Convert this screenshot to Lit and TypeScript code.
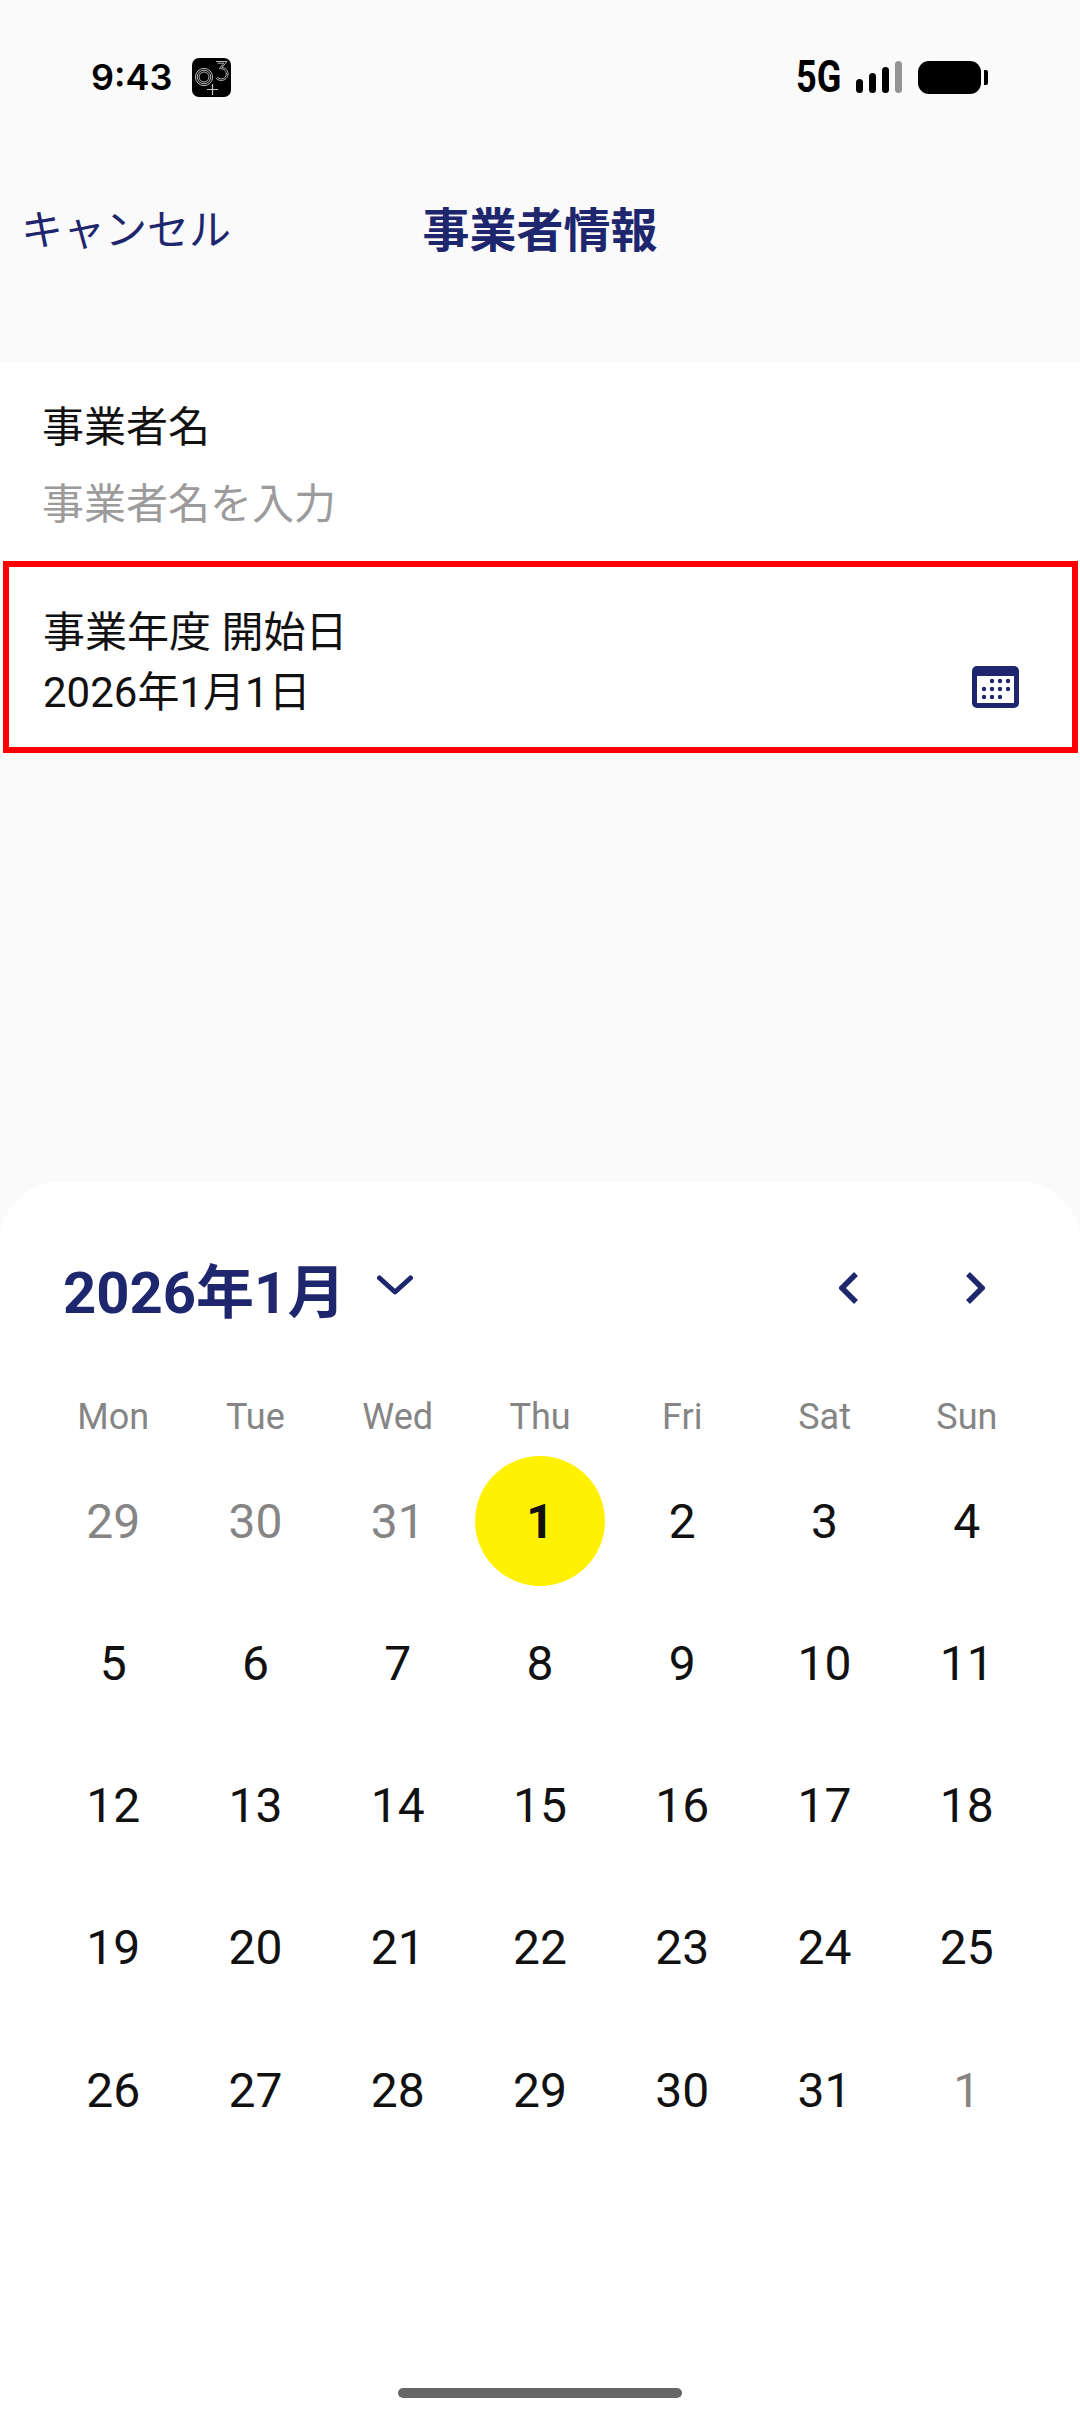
import { LitElement, css, html, svg } from 'lit';
import { customElement } from 'lit/decorators.js';
import { classMap } from 'lit/directives/class-map.js';

const WEEKDAYS = ['Mon', 'Tue', 'Wed', 'Thu', 'Fri', 'Sat', 'Sun'];

// 35 cells, Mon start, Jan 2026 with the overflow days marked as muted
const DAYS: { n: number; muted?: boolean; selected?: boolean }[] = [
  { n: 29, muted: true },
  { n: 30, muted: true },
  { n: 31, muted: true },
  ...Array.from({ length: 31 }, (_, i) => ({ n: i + 1, selected: i === 0 })),
  { n: 1, muted: true },
];

const o3Icon = html`
  <svg class="o3" viewBox="0 0 39 39" aria-hidden="true">
    <rect width="39" height="39" rx="7" fill="#000" />
    <g fill="none" stroke="#c9c9c9" stroke-width="0.9">
      <circle cx="12" cy="19" r="8.6" />
      <circle cx="12" cy="19" r="6.8" />
      <circle cx="12" cy="19" r="5" />
      <path d="M24 3.5h11l-5 6c3.400.2 6 2.800 6 6.300 0 3.900-3 6.700-6.800 6.700-2.300 0-4.200-1-5.400-2.700" />
      <path d="M25.500 5.200h6.400l-4.600 5.500c3.800-.5 7 1.700 7 5.200 0 3-2.300 5-5 5-1.700 0-3-.7-4-1.900" />
      <path d="M20.500 26v11M15 31.500h11" stroke-width="1.200" />
    </g>
  </svg>
`;

const calendarDots: [number, number][] = [
  [20, 15], [28, 15], [36, 15],
  [12, 23], [20, 23], [28, 23], [36, 23],
  [12, 31], [20, 31], [28, 31],
];

const calendarIcon = html`
  <svg class="cal" viewBox="0 0 47 42" aria-hidden="true">
    <rect width="47" height="42" rx="5" fill="#1e276e" />
    <rect x="5" y="10" width="37" height="27" fill="#fff" />
    ${calendarDots.map(([x, y]) => svg`<circle cx=${x} cy=${y} r="2.200" fill="#1e276e" />`)}
  </svg>
`;

@customElement('app-root')
export class AppRoot extends LitElement {
  render() {
    return html`
      <div class="page">
        <div class="status">
          <div class="status-left">
            <span class="time">9:43</span>
            ${o3Icon}
          </div>
          <div class="status-right">
            <span class="net">5G</span>
            <div class="signal">
              <i style="height:14px"></i>
              <i style="height:20px"></i>
              <i style="height:26px"></i>
              <i class="off" style="height:32px"></i>
            </div>
            <div class="battery"><b></b><u></u></div>
          </div>
        </div>

        <div class="nav">
          <span class="cancel">キャンセル</span>
          <span class="title">事業者情報</span>
          <span></span>
        </div>

        <div class="form">
          <div class="field">
            <div class="label">事業者名</div>
            <div class="placeholder">事業者名を入力</div>
          </div>
          <div class="field focused">
            <div class="label">事業年度 開始日</div>
            <div class="value">
              <span>2026年1月1日</span>
              ${calendarIcon}
            </div>
          </div>
        </div>

        <div class="sheet">
          <div class="sheet-head">
            <div class="month">
              <span>2026年1月</span>
              <svg class="chev-down" viewBox="0 0 36 20" aria-hidden="true">
                <path d="M2.500 3 18 17 33.500 3" />
              </svg>
            </div>
            <div class="arrows">
              <svg viewBox="0 0 20 32" aria-hidden="true"><path d="M17 2 3 16l14 14" /></svg>
              <svg viewBox="0 0 20 32" aria-hidden="true"><path d="M3 2l14 14L3 30" /></svg>
            </div>
          </div>
          <div class="grid weekdays">
            ${WEEKDAYS.map((d) => html`<div class="weekday">${d}</div>`)}
          </div>
          <div class="grid days">
            ${DAYS.map(
              (d) => html`
                <div class="day">
                  <span class=${classMap({ num: true, muted: !!d.muted, selected: !!d.selected })}>${d.n}</span>
                </div>
              `,
            )}
          </div>
          <div class="home"></div>
        </div>
      </div>
    `;
  }

  static styles = css`
    :host {
      display: block;
    }

    .page {
      display: flex;
      flex-direction: column;
      width: 1080px;
      height: 2424px;
      background: #fafafa;
      font-family: Roboto, 'Noto Sans CJK JP', sans-serif;
      color: #111;
      overflow: hidden;
    }

    /* Status bar */
    .status {
      display: flex;
      justify-content: space-between;
      align-items: center;
      height: 156px;
      padding: 0 92px 2px 91px;
      box-sizing: border-box;
    }

    .status-left {
      display: flex;
      align-items: center;
      gap: 20px;
    }

    .time {
      font-family: Inter, sans-serif;
      font-size: 36px;
      font-weight: 600;
      color: #000;
    }

    .o3 {
      width: 39px;
      height: 39px;
    }

    .status-right {
      display: flex;
      align-items: center;
    }

    .net {
      font-size: 44px;
      font-weight: 700;
      line-height: 44px;
      color: #000;
      margin-right: 15px;
      transform: scaleX(0.82);
      transform-origin: right center;
    }

    .signal {
      display: flex;
      align-items: flex-end;
      gap: 6px;
      margin-right: 16px;
      height: 32px;
    }

    .signal i {
      display: block;
      width: 7px;
      border-radius: 3.500px;
      background: #000;
    }

    .signal i.off {
      background: #949494;
    }

    .battery {
      display: flex;
      align-items: center;
      gap: 3px;
    }

    .battery b {
      display: block;
      width: 63px;
      height: 33px;
      border-radius: 11px;
      background: #000;
    }

    .battery u {
      display: block;
      width: 4px;
      height: 15px;
      border-radius: 0 2px 2px 0;
      background: #000;
    }

    /* Nav */
    .nav {
      display: grid;
      grid-template-columns: 1fr auto 1fr;
      align-items: center;
      height: 150px;
      padding: 0 21px;
      margin-bottom: 56px;
      color: #1e276e;
    }

    .cancel {
      font-size: 42px;
      line-height: 150px;
    }

    .title {
      font-size: 47px;
      font-weight: 700;
      line-height: 150px;
    }

    /* Form */
    .form {
      background: #fff;
    }

    .field {
      padding: 33px 42px 0;
      height: 199px;
      box-sizing: border-box;
      font-size: 42px;
      line-height: 66px;
    }

    .label {
      height: 66px;
    }

    .placeholder {
      color: #9b9b9b;
      margin-top: 11px;
    }

    .field.focused {
      height: 192px;
      margin: 0 2px 0 3px;
      padding: 36px 53px 0 34px;
      border: 6px solid #f00;
      line-height: 60px;
    }

    .field.focused .label {
      height: 60px;
    }

    .value {
      display: flex;
      justify-content: space-between;
    }

    .cal {
      width: 47px;
      height: 42px;
      margin-top: 3px;
    }

    /* Bottom sheet */
    .sheet {
      margin-top: auto;
      height: 1242px;
      box-sizing: border-box;
      padding: 73px 42px 0;
      background: #fff;
      border-radius: 60px 60px 0 0;
      position: relative;
    }

    .sheet-head {
      display: flex;
      justify-content: space-between;
      align-items: center;
      height: 66px;
      padding: 0 53px 0 21px;
    }

    .month {
      display: flex;
      align-items: center;
      gap: 32px;
      font-size: 58px;
      font-weight: 700;
      color: #1e276e;
    }

    .chev-down {
      width: 36px;
      height: 20px;
      fill: none;
      stroke: #1e276e;
      stroke-width: 5;
      stroke-linecap: round;
      stroke-linejoin: round;
      margin-bottom: 6px;
    }

    .arrows {
      display: flex;
      gap: 106px;
    }

    .arrows svg {
      width: 20px;
      height: 32px;
      fill: none;
      stroke: #1e276e;
      stroke-width: 5.500;
    }

    .grid {
      display: grid;
      grid-template-columns: repeat(7, 142.286px);
    }

    .weekdays {
      margin-top: 62px;
      height: 67px;
      align-items: center;
    }

    .weekday {
      text-align: center;
      font-size: 36px;
      color: #858585;
    }

    .days {
      grid-auto-rows: 142.286px;
    }

    .day {
      display: flex;
      align-items: center;
      justify-content: center;
    }

    .num {
      display: flex;
      align-items: center;
      justify-content: center;
      width: 130px;
      height: 130px;
      border-radius: 50%;
      font-size: 48px;
      color: #111;
    }

    .num.muted {
      color: #858585;
    }

    .num.selected {
      background: #fff100;
      font-weight: 700;
    }

    .home {
      position: absolute;
      left: 398px;
      bottom: 26px;
      width: 284px;
      height: 10px;
      border-radius: 5px;
      background: #666;
    }
  `;
}

declare global {
  interface HTMLElementTagNameMap {
    'app-root': AppRoot;
  }
}
